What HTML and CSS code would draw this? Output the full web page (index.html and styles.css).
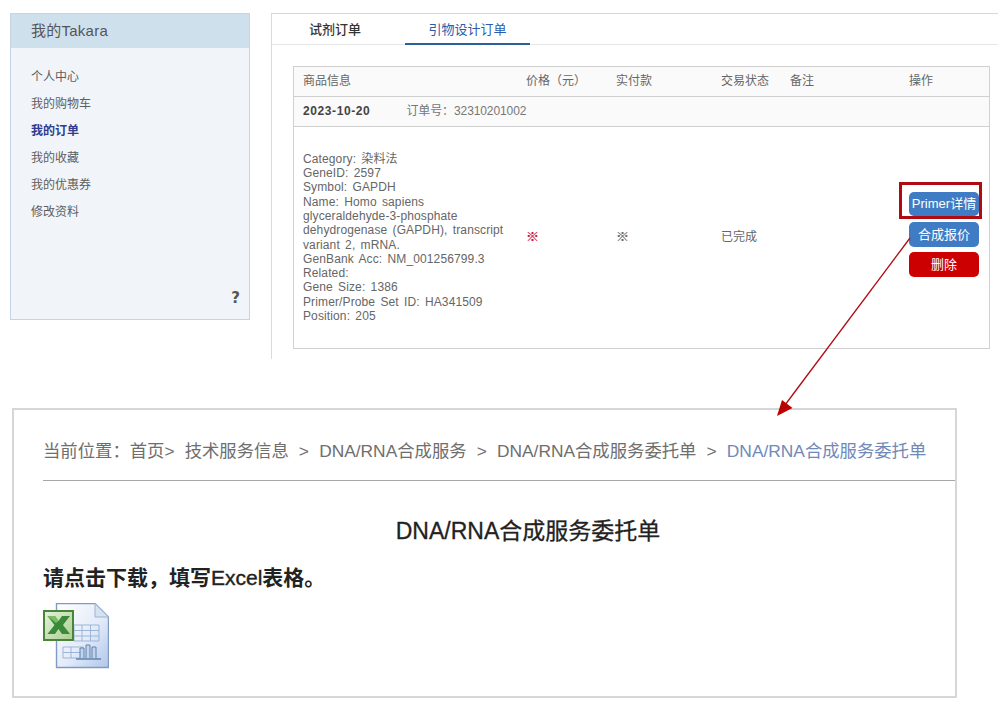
FILE: index.html
```html
<!DOCTYPE html>
<html lang="zh-CN">
<head>
<meta charset="utf-8">
<title>我的订单</title>
<link rel="stylesheet" href="styles.css">
</head>
<body>
<div class="page">
  <div class="top">
    <aside class="sidebar">
      <h2 class="side-title">我的Takara</h2>
      <ul class="side-nav">
        <li>个人中心</li>
        <li>我的购物车</li>
        <li class="is-active">我的订单</li>
        <li>我的收藏</li>
        <li>我的优惠券</li>
        <li>修改资料</li>
      </ul>
      <div class="side-help">?</div>
    </aside>
    <main class="orders">
      <nav class="tabs">
        <div class="tab">试剂订单</div>
        <div class="tab tab-active">引物设计订单</div>
      </nav>
      <section class="table">
        <div class="row row-head">
          <div class="c-info">商品信息</div>
          <div class="c-price">价格（元）</div>
          <div class="c-paid">实付款</div>
          <div class="c-state">交易状态</div>
          <div class="c-note">备注</div>
          <div class="c-op">操作</div>
        </div>
        <div class="row-date">
          <strong class="date">2023-10-20</strong>
          <span class="order-no">订单号：32310201002</span>
        </div>
        <div class="row row-body">
          <div class="c-info detail">Category: 染料法<br>GeneID: 2597<br>Symbol: GAPDH<br>Name: Homo sapiens<br>glyceraldehyde-3-phosphate<br>dehydrogenase (GAPDH), transcript<br>variant 2, mRNA.<br>GenBank Acc: NM_001256799.3<br>Related:<br>Gene Size: 1386<br>Primer/Probe Set ID: HA341509<br>Position: 205</div>
          <div class="c-price cell-up mark mark-red">※</div>
          <div class="c-paid cell-up mark">※</div>
          <div class="c-state cell-up">已完成</div>
          <div class="c-note"></div>
          <div class="c-op actions">
            <button class="btn btn-blue btn-tight">Primer详情</button>
            <button class="btn btn-blue">合成报价</button>
            <button class="btn btn-red">删除</button>
          </div>
        </div>
      </section>
    </main>
  </div>

  <section class="form-card">
    <div class="crumbs">当前位置：首页&gt; &nbsp;技术服务信息 &nbsp;&gt; &nbsp;DNA/RNA合成服务 &nbsp;&gt; &nbsp;DNA/RNA合成服务委托单 &nbsp;&gt; &nbsp;<span class="crumb-now">DNA/RNA合成服务委托单</span></div>
    <h1 class="form-title">DNA/RNA合成服务委托单</h1>
    <p class="form-hint">请点击下载，填写<span class="hint-latin">Excel</span>表格。</p>
    <svg class="xls" width="66" height="66" viewBox="0 0 66 66" aria-label="Excel">
      <defs>
        <linearGradient id="paper" x1="0" y1="0" x2="1" y2="1">
          <stop offset="0" stop-color="#ffffff"/>
          <stop offset="0.55" stop-color="#e4ecf9"/>
          <stop offset="1" stop-color="#b0c6ea"/>
        </linearGradient>
        <linearGradient id="green" x1="0" y1="0" x2="1" y2="1">
          <stop offset="0" stop-color="#e6f2dc"/>
          <stop offset="1" stop-color="#a8cf90"/>
        </linearGradient>
      </defs>
      <path d="M13.5 .5H52L65.5 14V64.5H13.5Z" fill="url(#paper)" stroke="#7f9cc0" stroke-width="1.4"/>
      <path d="M52 .5V14H65.5Z" fill="#d6e2f2" stroke="#9db4d0"/>
      <path d="M31 22H56V38H31ZM31 27.5H56M31 33H56M39 22V38M47.5 22V38M20 44H40V55H20ZM20 49.5H40M28 44V55" fill="none" stroke="#9cb5d8" stroke-width="1"/>
      <path d="M37 55V45H41V55M43 55V42H47V55M49 55V44H53V55" fill="#c4d4ea" stroke="#5f82b0"/>
      <path d="M33 56H58" stroke="#5f82b0" stroke-width="1.5"/>
      <rect x="1" y="8" width="29" height="29" fill="url(#green)" stroke="#4a8438" stroke-width="2"/>
      <path d="M4.500 13H12L15.500 18L19 13H27L20 22L27 31H19L15.500 26L12 31H4.500L11.500 22Z" fill="#3a8a38"/>
      <path d="M4.500 13H12L15.500 18L13 20Z" fill="#7bbd66"/>
    </svg>
  </section>

  <div class="callout-box"></div>
  <svg class="callout-arrow" width="1008" height="705" viewBox="0 0 1008 705" aria-hidden="true">
    <path d="M910 238L785 405" stroke="#b00a12" stroke-width="1.300" fill="none"/>
    <path d="M777 416L782 400L792.500 408Z" fill="#b80000"/>
  </svg>
</div>
</body>
</html>
```
FILE: styles.css
```css
* { box-sizing: border-box; }
html, body { margin: 0; padding: 0; background: #fff; }
body {
  font-family: "Liberation Sans", "Noto Sans CJK SC", sans-serif;
  font-size: 12px;
  color: #666;
}
.page { position: relative; width: 1008px; height: 705px; overflow: hidden; }

.top { display: flex; padding: 13px 0 0 10px; gap: 21px; }

.sidebar {
  position: relative;
  width: 240px;
  height: 307px;
  background: #f1f4f9;
  border: 1px solid #c5d5e3;
}
.side-title {
  margin: 0;
  height: 34px;
  padding-left: 20px;
  background: #cfe0ed;
  font-size: 15px;
  font-weight: normal;
  line-height: 33px;
  letter-spacing: .25px;
  color: #555;
}
.side-nav { list-style: none; margin: 0; padding: 16px 0 0 20px; }
.side-nav li { height: 27px; line-height: 27px; color: #5e5e5e; }
.side-nav .is-active { color: #2e3b8f; font-weight: bold; }
.side-help {
  position: absolute;
  right: 9px;
  bottom: 13px;
  font: bold 15px/16px "DejaVu Sans", sans-serif;
  color: #555;
}

.orders {
  width: 727px;
  height: 346px;
  border-top: 1px solid #cddbe0;
  border-left: 1px solid #d5dce2;
  padding-bottom: 10px;
}
.tabs {
  display: flex;
  gap: 7px;
  height: 31px;
  border-bottom: 1px solid #e4e6e8;
}
.tab {
  width: 126px;
  height: 31px;
  line-height: 32px;
  text-align: center;
  font-size: 13px;
  color: #333;
  font-weight: 500;
}
.tab-active {
  width: 125px;
  color: #2a5ca8;
  font-weight: normal;
  border-bottom: 2px solid #2a6099;
}

.table {
  width: 697px;
  height: 283px;
  margin: 21px 0 0 21px;
  border: 1px solid #d0d0d0;
  display: flex;
  flex-direction: column;
}
.row {
  display: grid;
  grid-template-columns: 232px 90px 105px 69px 119px 1fr;
}
.row-head {
  height: 30px;
  background: #fafafa;
  border-bottom: 1px solid #d0d0d0;
  line-height: 29px;
}
.c-info { padding-left: 9px; }
.row-date {
  height: 30px;
  padding-left: 9px;
  background: #fafafa;
  border-bottom: 1px solid #d0d0d0;
  line-height: 29px;
  display: flex;
  gap: 36px;
}
.date { color: #444; font-weight: bold; letter-spacing: .6px; }
.order-no { color: #777; letter-spacing: -.1px; }

.row-body { flex: 1; align-items: center; }
.detail { line-height: 14.33px; word-spacing: 1.8px; letter-spacing: .12px; white-space: nowrap; }
.cell-up { margin-bottom: 4px; }
.mark { font-size: 13px; -webkit-text-stroke: .2px; }
.mark-red { color: #c8102e; }

.actions { display: flex; flex-direction: column; align-items: flex-start; gap: 5px; margin-top: -7px; }
.btn {
  width: 70px;
  height: 25px;
  padding: 0;
  border: 0;
  border-radius: 5px;
  color: #fff;
  font: 13px/25px "Liberation Sans", "Noto Sans CJK SC", sans-serif;
  text-align: center;
  white-space: nowrap;
}
.btn-tight { height: 24px; line-height: 24px; margin: 1px 0; }
.btn-blue { background: #3f7cc4; }
.btn-red { background: #cc0000; }

.form-card {
  width: 945px;
  height: 290px;
  margin: 49px 0 0 12px;
  border: 2px solid #d6d6d6;
  padding-left: 29px;
}
.crumbs {
  height: 71px;
  padding-top: 28px;
  line-height: 26px;
  font-size: 17.35px;
  word-spacing: .25px;
  color: #6e6e6e;
  border-bottom: 1px solid #a8a8a8;
  white-space: nowrap;
}
.crumb-now { color: #7089b8; }
.form-title {
  margin: 35px 0 0;
  padding-left: 58px;
  text-align: center;
  font-size: 23px;
  line-height: 30px;
  font-weight: normal;
  color: #222;
  -webkit-text-stroke: .3px;
}
.form-hint {
  margin: 18px 0 0;
  font-size: 21px;
  line-height: 28px;
  font-weight: bold;
  color: #222;
}
.hint-latin { font-weight: normal; -webkit-text-stroke: .4px; }
.xls { display: block; margin-top: 11px; filter: blur(.4px); }

.callout-box {
  position: absolute;
  left: 899px;
  top: 182px;
  width: 83px;
  height: 37px;
  border: 3px solid #b00a12;
}
.callout-arrow { position: absolute; left: 0; top: 0; pointer-events: none; }
```
